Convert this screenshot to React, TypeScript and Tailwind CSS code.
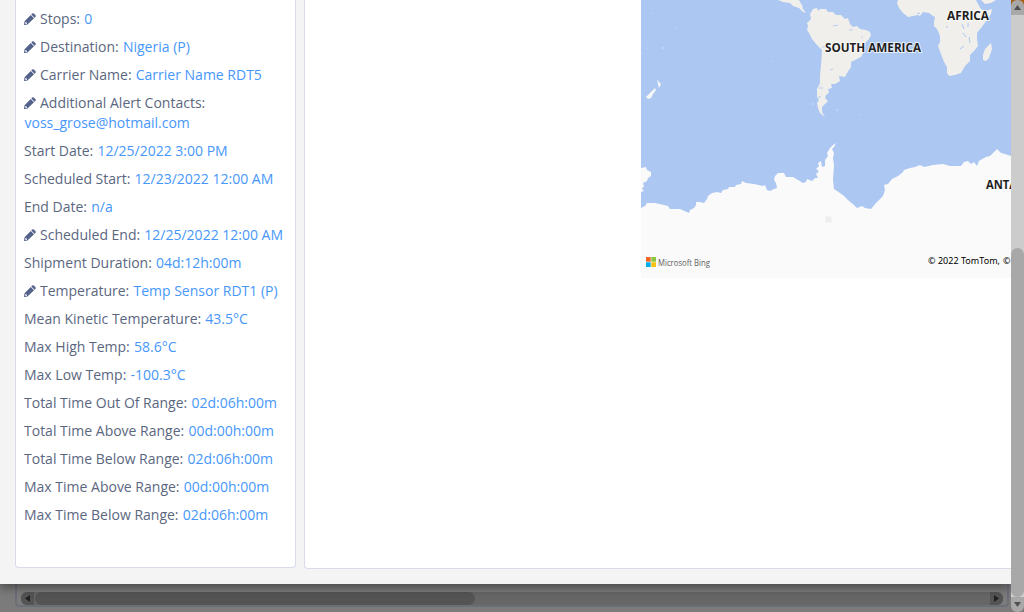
import React from "react";

type Detail = { label: string; value: string; editable?: boolean };

const details: Detail[] = [
  { label: "Stops:", value: "0", editable: true },
  { label: "Destination:", value: "Nigeria (P)", editable: true },
  { label: "Carrier Name:", value: "Carrier Name RDT5", editable: true },
  { label: "Additional Alert Contacts:", value: "voss_grose@hotmail.com", editable: true },
  { label: "Start Date:", value: "12/25/2022 3:00 PM" },
  { label: "Scheduled Start:", value: "12/23/2022 12:00 AM" },
  { label: "End Date:", value: "n/a" },
  { label: "Scheduled End:", value: "12/25/2022 12:00 AM", editable: true },
  { label: "Shipment Duration:", value: "04d:12h:00m" },
  { label: "Temperature:", value: "Temp Sensor RDT1 (P)", editable: true },
  { label: "Mean Kinetic Temperature:", value: "43.5°C" },
  { label: "Max High Temp:", value: "58.6°C" },
  { label: "Max Low Temp:", value: "-100.3°C" },
  { label: "Total Time Out Of Range:", value: "02d:06h:00m" },
  { label: "Total Time Above Range:", value: "00d:00h:00m" },
  { label: "Total Time Below Range:", value: "02d:06h:00m" },
  { label: "Max Time Above Range:", value: "00d:00h:00m" },
  { label: "Max Time Below Range:", value: "02d:06h:00m" },
];

function PencilIcon() {
  return (
    <svg className="mr-1 inline-block size-3 align-[-1px] text-[#52628a]" viewBox="0 0 12 12" fill="currentColor">
      <path d="M8.200 .5Q9 -.2 9.800 .5L11.500 2.200Q12.200 3 11.500 3.800L10.600 4.700L7.300 1.400Z" />
      <path
        fillRule="evenodd"
        d="M6.700 2L10 5.300L3.500 11.400L.5 12Q0 12 0 11.500L.6 8.300ZM1.500 9L1.100 10.300L1.800 11L3 10.700V9.700H2.200V9Z"
      />
    </svg>
  );
}

function DetailRow({ label, value, editable }: Detail) {
  return (
    <div>
      {editable && <PencilIcon />}
      {label} <span className="pl-[0.5px] text-[#4797fb]">{value}</span>
    </div>
  );
}

function WorldMap() {
  return (
    <div className="relative h-[278px] w-[370px] shrink-0 overflow-hidden bg-[#abc7f2]">
      <svg className="block" width="370" height="278" viewBox="641 0 370 278">
        <g fill="#f0efec">
          <path d="M778 0L783 2 790 3 793 6 799 8 803 12 806 13 803 9 802 5 800 2 799 0Z" />
          <path d="M810 14L813 9 817 8 818 11 820 9 826 9 828 12 833 12 836 15 841 15 845 19 848 18 850 24 853 27 857 26 860 29 866 30 870 32 871 35 869 39 865 43 864 51 861 57 855 60 851 62 851 67 847 73 845 77 839 76 840 81 835 84 831 84 832 88 828 89 829 93 826 95 825 98 828 101 825 104 822 107 822 112 825 117 820 113 818 108 817 103 819 100 817 97 817 89 820 83 820 76 821 65 822 50 816 44 812 39 809 33 807 30 808 26 807 23 811 19Z" />
          <path d="M898 0L897 3 899 8 903 13 908 17 913 16 918 15 920 16 923 12 929 13 933 16 935 17 934 22 934 26 937 29 940 36 940 42 938 46 941 54 944 62 947 67 947 73 949 76 955 75 961 73 965 66 970 61 970 55 974 51 978 46 977 39 977 33 981 28 987 20 991 14 992 9 985 11 981 9 978 4 976 0Z" />
          <path d="M981 0L985 4 991 3 996 0Z" />
          <path d="M991 43L992 49 989 58 986 61 983 60 983 55 985 49Z" />
        </g>
        <g fill="#f8f8f7">
          <path d="M646 97L650 93 655 88 656 90 653 94 651 98 648 99Z" />
          <path d="M657 79L659 82 661 84 659 88 658 84Z" />
        </g>
        <g stroke="#abc7f2" fill="none">
          <path d="M833 26l5-1M849 30l4 0M830 70l3-1M819 88l4 0M818 97l3 0" opacity=".8" />
          <path d="M962 24l2 5M963 33l3 4M969 37l1 6M964 46l-4 3M968 23v4M917 14l3-1M947 26v2" />
          <path d="M822 47h3M861 37h2" opacity=".7" />
        </g>
        <g fill="#bdd2f4">
          <rect x="662" y="47" width="2" height="2" /><rect x="663" y="35" width="1" height="1" />
          <rect x="650" y="7" width="1" height="1" /><rect x="651" y="13" width="2" height="1" />
          <rect x="676" y="27" width="1" height="2" /><rect x="695" y="20" width="2" height="1" />
          <rect x="647" y="47" width="1" height="2" /><rect x="642" y="53" width="1" height="1" />
          <rect x="836" y="109" width="2" height="2" /><rect x="860" y="114" width="2" height="1" />
          <rect x="882" y="123" width="1" height="1" /><rect x="1000" y="54" width="1" height="1" />
          <rect x="771" y="61" width="2" height="1" /><rect x="812" y="103" width="2" height="2" />
        </g>
        <path
          fill="#fafafa"
          d="M641 168L646 167 647 170 651 172 651 176 648 178 647 181 643 183 644 186 642 189 644 191 641 192ZM641 208L645 206 647 203 655 203 664 205 668 206 670 209 680 209 689 213 690 210 694 208 696 205 696 202 700 202 704 203 707 199 708 196 712 193 717 192 721 193 723 190 728 189 729 187 735 187 736 185 741 184 742 181 746 183 754 184 763 186 765 185 767 190 770 191 774 189 777 188 776 183 774 180 775 176 778 173 784 173 786 177 793 177 798 180 803 183 806 182 807 179 812 181 815 178 818 178 816 174 819 171 816 169 819 166 818 163 821 161 822 167 825 166 825 160 828 156 827 153 830 148 833 145 836 143 834 147 832 149 834 153 833 158 834 165 833 180 834 189 840 193 844 196 849 201 854 205 857 208 862 206 865 208 871 209 876 203 880 199 883 196 885 190 884 185 888 184 892 179 898 176 903 172 904 170 910 168 915 167 920 165 924 167 933 165 943 164 950 166 961 166 964 162 968 161 971 164 974 162 977 166 979 161 984 158 986 157 990 156 994 152 997 149 1001 153 1005 154 1011 156V278H641Z"
        />
        <rect x="825.500" y="216.500" width="6" height="6" fill="#ededed" />
        <g fontFamily="Open Sans, sans-serif" fontSize="12" fontWeight="700" fill="#1f1f1f" stroke="#ffffff" strokeOpacity=".7" strokeWidth="2" paintOrder="stroke">
          <text x="825" y="52" textLength="96" lengthAdjust="spacingAndGlyphs">SOUTH AMERICA</text>
          <text x="947" y="20" textLength="42" lengthAdjust="spacingAndGlyphs">AFRICA</text>
          <text x="986" y="189" textLength="31" lengthAdjust="spacingAndGlyphs">ANTA</text>
        </g>
        <path fill="#f26522" d="M646 257h4.700v4.700h-4.700z" />
        <path fill="#8dc63f" d="M651.300 257h4.700v4.700h-4.700z" />
        <path fill="#00aeef" d="M646 262.300h4.700v4.700h-4.700z" />
        <path fill="#ffc20e" d="M651.300 262.300h4.700v4.700h-4.700z" />
        <text x="658" y="265.500" fontFamily="Open Sans, sans-serif" fontSize="8.500" fill="#606060" textLength="52" lengthAdjust="spacingAndGlyphs">Microsoft Bing</text>
        <g fontFamily="Noto Sans, sans-serif" fontSize="9" fill="#000">
          <text x="928" y="264" textLength="72" lengthAdjust="spacing">© 2022 TomTom,</text>
          <text x="1003" y="264">©</text>
        </g>
      </svg>
    </div>
  );
}

function PageScrollbar() {
  return (
    <div className="flex h-full w-[13px] shrink-0 flex-col bg-[#cccccc]">
      <div className="h-[15px] bg-[#a85e10]">
        <div className="flex h-full items-center justify-center rounded-t-[6px] bg-[#a8a8a8]">
          <svg width="7" height="5" viewBox="0 0 7 5"><path d="M3.500 0L7 5H0Z" fill="#505050" /></svg>
        </div>
      </div>
      <div className="flex-1 pt-[233px]">
        <div className="h-[349px] rounded-[6.500px] bg-[#a8a8a8]" />
      </div>
      <div className="h-[15px] bg-[#7b7b7b]">
        <div className="flex h-full items-center justify-center rounded-b-[6px] bg-[#a8a8a8]">
          <svg width="7" height="5" viewBox="0 0 7 5"><path d="M0 0H7L3.500 5Z" fill="#505050" /></svg>
        </div>
      </div>
    </div>
  );
}

function TableScrollbar() {
  return (
    <div className="h-7 pr-[2px] pl-[15px]">
      <div className="h-[23px] rounded-b-[4px] border-x-2 border-b-2 border-[#6a6f77] pt-2 pr-1 pl-1">
        <div className="flex h-[13px] overflow-hidden rounded-[6px] bg-[#666666]">
          <div className="flex w-[13px] items-center justify-center bg-[#545454]">
            <svg width="5" height="7" viewBox="0 0 5 7"><path d="M5 0V7L0 3.500Z" fill="#222" /></svg>
          </div>
          <div className="flex-1 pl-px">
            <div className="h-[13px] w-[440px] rounded-[6.500px] bg-[#545454]" />
          </div>
          <div className="flex w-[13px] items-center justify-center bg-[#545454]">
            <svg width="5" height="7" viewBox="0 0 5 7"><path d="M0 0V7L5 3.500Z" fill="#222" /></svg>
          </div>
        </div>
      </div>
    </div>
  );
}

export default function App() {
  return (
    <div className="flex h-[612px] w-[1024px] overflow-hidden bg-[#7b7b7b] font-['Open_Sans',sans-serif]">
      <div className="flex w-[1011px] flex-col overflow-hidden">
        <div className="z-10 flex h-[584px] shrink-0 gap-2 bg-[#f4f4f4] pl-[15px] shadow-[0_3px_10px_rgba(0,0,0,0.45)]">
          <aside className="h-[568px] w-[281px] shrink-0 rounded-b-[4px] border-x border-b border-[#d8dbe8] bg-white px-2 pt-[9px]">
            <div className="flex flex-col gap-2 text-sm leading-5 text-[#5b6780]">
              {details.map((detail) => (
                <DetailRow key={detail.label} {...detail} />
              ))}
            </div>
          </aside>
          <main className="flex h-[569px] flex-1 justify-end rounded-bl-[4px] border-b border-l border-[#d8dbe8] bg-white">
            <WorldMap />
          </main>
        </div>
        <TableScrollbar />
      </div>
      <PageScrollbar />
    </div>
  );
}
